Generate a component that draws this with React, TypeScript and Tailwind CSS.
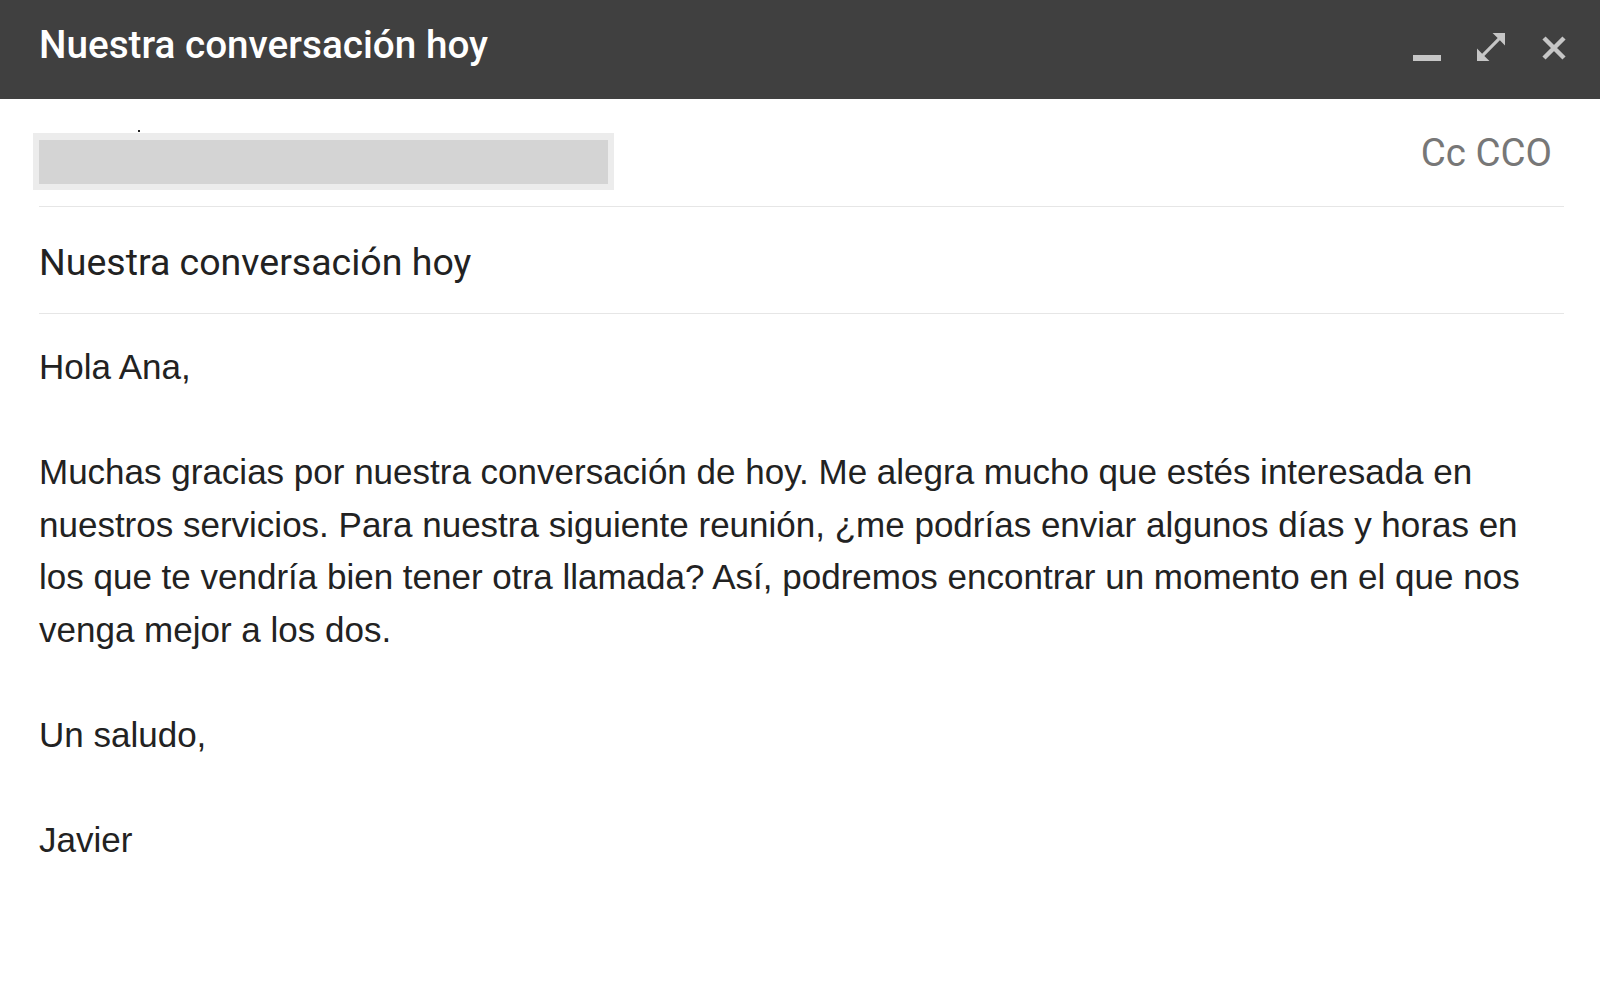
import React from "react";

export default function App() {
  return (
    <div className="w-[1600px] h-[1000px] bg-white overflow-hidden font-[family-name:Roboto,sans-serif]">
      <div className="h-[99px] bg-[#404040] flex items-start justify-between pl-[39px] pr-[33px]">
        <div className="mt-[23px] text-[38.7px] leading-[44px] font-medium text-white">
          Nuestra conversación hoy
        </div>
        <div className="flex items-center mt-[33px] gap-[36px]">
          <svg width="28" height="28" viewBox="0 0 28 28">
            <rect x="0" y="22" width="28" height="7" fill="#c6c6c6" />
          </svg>
          <svg width="28" height="28" viewBox="3 3 18 18">
            <path d="M21 11V3h-8l3.29 3.29-10 10L3 13v8h8l-3.29-3.29 10-10z" fill="#c6c6c6" />
          </svg>
          <svg width="26" height="26" viewBox="0 0 26 26" className="mt-[2px]">
            <path d="M3 3L23 23M23 3L3 23" stroke="#c6c6c6" strokeWidth="4.5" />
          </svg>
        </div>
      </div>
      <div className="pl-[39px] pr-[36px]">
        <div className="h-[108px] border-b border-[#e6e6e6] flex items-start justify-between">
          <div className="relative -ml-[6px] mt-[34px] w-[581px] h-[57px] bg-[#ececec] pl-[6px] pr-[6px] pt-[7px] pb-[6px]">
            <div className="absolute left-[105px] -top-[3px] w-[2px] h-[2px] bg-[#222]" />
            <div className="w-full h-full bg-[#d4d4d4]" />
          </div>
          <div className="mt-[32px] mr-[12px] text-[38.5px] leading-[44px] text-[#777777]">Cc CCO</div>
        </div>
        <div className="h-[107px] border-b border-[#e6e6e6] flex items-center">
          <div className="mt-[3px] text-[37.5px] leading-[44px] text-[#222222]">Nuestra conversación hoy</div>
        </div>
        <div className="pt-[27px] text-[35px] leading-[52.6px] text-[#222222] font-[family-name:Liberation_Sans,Arial,sans-serif]">
          <p>Hola Ana,</p>
          <p>&nbsp;</p>
          <p>
            Muchas gracias por nuestra conversación de hoy. Me alegra mucho que estés interesada en nuestros servicios. Para nuestra siguiente reunión, ¿me podrías enviar algunos días y horas en los que te vendría bien tener otra llamada? Así, podremos encontrar un momento en el que nos venga mejor a los dos.
          </p>
          <p>&nbsp;</p>
          <p>Un saludo,</p>
          <p>&nbsp;</p>
          <p>Javier</p>
        </div>
      </div>
    </div>
  );
}
